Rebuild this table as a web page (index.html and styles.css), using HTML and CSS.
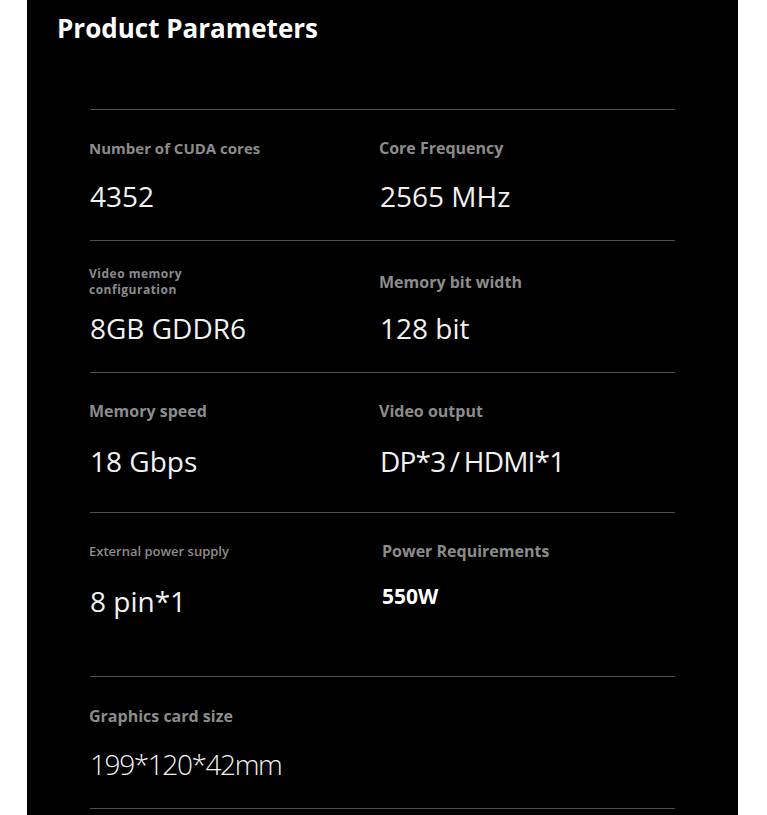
FILE: index.html
```html
<!DOCTYPE html>
<html lang="en">
<head>
<meta charset="utf-8">
<title>Product Parameters</title>
<link rel="stylesheet" href="styles.css">
</head>
<body>
<main class="panel">
  <h1 class="title">Product Parameters</h1>
  <section class="specs">
    <div class="row row-a">
      <div class="label label-compact">Number of CUDA cores</div>
      <div class="label">Core Frequency</div>
      <div class="value">4352</div>
      <div class="value">2565 MHz</div>
    </div>
    <div class="row row-b">
      <div class="label label-xs">Video memory<br>configuration</div>
      <div class="label label-mid">Memory bit width</div>
      <div class="value">8GB GDDR6</div>
      <div class="value">128 bit</div>
    </div>
    <div class="row row-c">
      <div class="label">Memory speed</div>
      <div class="label">Video output</div>
      <div class="value">18 Gbps</div>
      <div class="value value-tight">DP*3 / HDMI*1</div>
    </div>
    <div class="row row-d">
      <div class="label label-sm">External power supply</div>
      <div class="label label-shift">Power Requirements</div>
      <div class="value">8 pin*1</div>
      <div class="value value-bold label-shift">550W</div>
    </div>
    <div class="row row-e">
      <div class="label">Graphics card size</div>
      <div class="value value-light">199*120*42mm</div>
    </div>
  </section>
</main>
</body>
</html>
```

FILE: styles.css
```css
html, body {
  margin: 0;
  padding: 0;
  background: #ffffff;
}

body {
  font-family: "Open Sans", "Noto Sans", sans-serif;
}

.panel {
  margin-left: 27px;
  width: 711px;
  min-height: 100vh;
  background: #000000;
  padding: 10px 0 0;
  box-sizing: border-box;
  overflow: hidden;
}

.title {
  margin: 0 0 63px 30px;
  font-size: 26px;
  line-height: 36px;
  font-weight: 700;
  color: #ffffff;
}

.specs {
  margin-left: 63px;
  width: 585px;
  border-bottom: 1px solid #4f4f4f;
}

.row {
  display: grid;
  grid-template-columns: 290px 1fr;
  border-top: 1px solid #4f4f4f;
}

.row-a { padding: 28px 0 26px; row-gap: 20px; }
.row-b { padding: 25px 0 26px; row-gap: 12px; }
.row-c { padding: 28px 0 33px; row-gap: 22px; }
.row-d { padding: 28px 0 57px; row-gap: 22px; }
.row-e { padding: 29px 0 26px; row-gap: 20px; grid-template-columns: 1fr; }

.label {
  font-size: 16px;
  line-height: 20px;
  font-weight: 700;
  color: #8c8c8c;
  margin-left: -1px;
}

.label-compact {
  font-size: 15px;
}

.label-xs {
  font-size: 12px;
  line-height: 16px;
  letter-spacing: 0.5px;
}

.label-mid {
  align-self: center;
  margin-left: -1px;
}

.label-sm {
  font-size: 13px;
  font-weight: 600;
}

.label-shift {
  margin-left: 2px;
}

.value {
  font-size: 28px;
  line-height: 36px;
  font-weight: 400;
  color: #f2f2f2;
}

.value-tight {
  word-spacing: -2px;
  letter-spacing: -0.8px;
}

.value-bold {
  font-size: 21px;
  line-height: 26px;
  font-weight: 700;
  color: #ffffff;
}

.value-light {
  font-weight: 300;
  letter-spacing: -1.4px;
}
```
